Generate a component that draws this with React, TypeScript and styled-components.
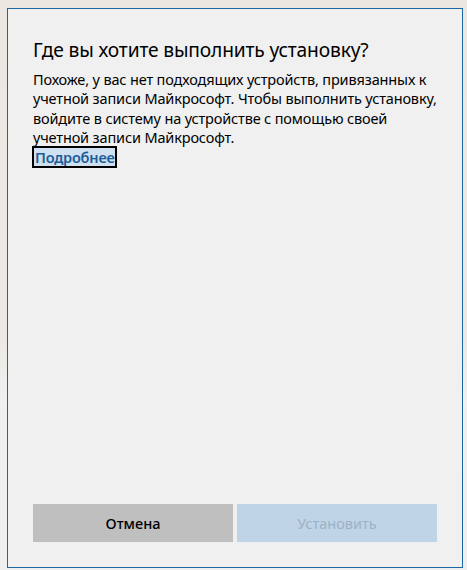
import React from "react";
import styled, { createGlobalStyle } from "styled-components";

const Global = createGlobalStyle`
  html, body { margin: 0; padding: 0; }
  body {
    width: 467px;
    height: 570px;
    overflow: hidden;
    background: linear-gradient(180deg, #ebe8e2 0%, #ece9e4 60%, #f0f0f0 70%, #efefef 100%);
    font-family: "Noto Sans", "Open Sans", sans-serif;
  }
`;

const Backdrop = styled.div`
  box-sizing: border-box;
  width: 467px;
  height: 570px;
  padding: 8px 4px 2px 7px;
  display: flex;
`;

const Dialog = styled.div`
  box-sizing: border-box;
  width: 456px;
  height: 560px;
  border: 1px solid #1f65a5;
  background: #f0f0f0;
  display: flex;
  flex-direction: column;
  padding: 28px 25px 25px 25px;
`;

const Title = styled.h1`
  margin: 0 0 7px 0;
  font-weight: 400;
  font-size: 19.2px;
  line-height: 26px;
  color: #000;
  letter-spacing: -0.15px;
`;

const Body = styled.p`
  margin: 0;
  font-size: 14.5px;
  line-height: 19.4px;
  color: #000;
  letter-spacing: -0.15px;
`;

const LinkRow = styled.div`
  display: flex;
  margin-top: -2px;
`;

const MoreLink = styled.a`
  display: inline-block;
  box-sizing: border-box;
  border: 2px solid #000;
  background: #cfe0f1;
  color: #1b5c98;
  font-size: 14.5px;
  font-weight: 600;
  line-height: 18px;
  padding: 0 0 0 1px;
  margin-left: -1px;
  letter-spacing: -0.2px;
  text-decoration: none;
`;

const Spacer = styled.div`
  flex: 1;
`;

const Buttons = styled.div`
  display: flex;
  gap: 4px;
`;

const Button = styled.button<{ $primary?: boolean }>`
  flex: 1;
  height: 38px;
  border: none;
  margin: 0;
  padding: 0;
  font-family: inherit;
  font-size: 14.5px;
  font-weight: ${(p) => (p.$primary ? 400 : 500)};
  background: ${(p) => (p.$primary ? "#bfd4e6" : "#bfbfbf")};
  color: ${(p) => (p.$primary ? "#9bb2c6" : "#000")};
`;

export default function App() {
  return (
    <>
      <Global />
      <Backdrop>
        <Dialog>
          <Title>Где вы хотите выполнить установку?</Title>
          <Body>
            Похоже, у вас нет подходящих устройств, привязанных к учетной
            записи Майкрософт. Чтобы выполнить установку, войдите в систему на
            устройстве с помощью своей учетной записи Майкрософт.
          </Body>
          <LinkRow>
            <MoreLink href="#">Подробнее</MoreLink>
          </LinkRow>
          <Spacer />
          <Buttons>
            <Button>Отмена</Button>
            <Button $primary disabled>
              Установить
            </Button>
          </Buttons>
        </Dialog>
      </Backdrop>
    </>
  );
}
